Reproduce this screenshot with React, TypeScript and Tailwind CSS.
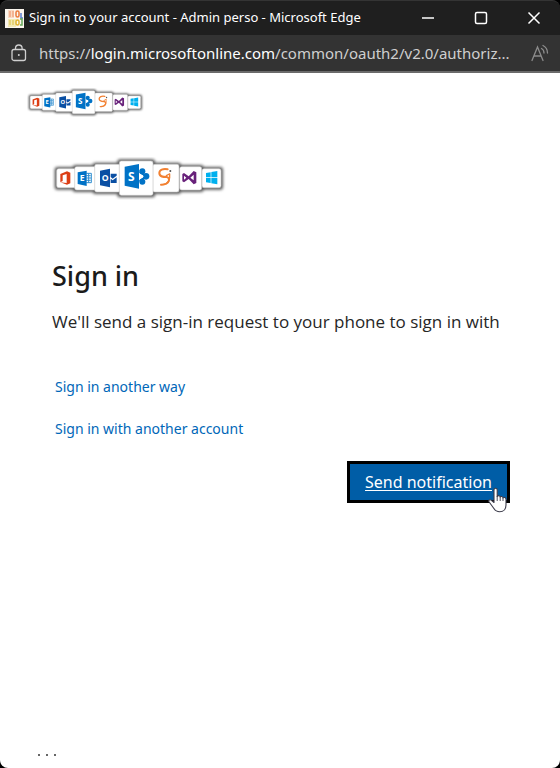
import React from "react";

type LogoProps = {
  className: string;
};

type TileProps = {
  x: number;
  y: number;
  width: number;
  height: number;
};

const tiles: TileProps[] = [
  { x: 35, y: 56, width: 57, height: 57 },
  { x: 471, y: 56, width: 57, height: 57 },
  { x: 89, y: 50, width: 64, height: 70 },
  { x: 404, y: 50, width: 66, height: 70 },
  { x: 149, y: 43, width: 77, height: 83 },
  { x: 323, y: 43, width: 79, height: 83 },
  { x: 223, y: 33, width: 101, height: 103 },
];

const BrandLogo: React.FC<LogoProps> = ({ className }) => {
  return (
    <svg
      viewBox="21 21 522 129"
      className={className}
      role="img"
      aria-label="Organization logo"
    >
      <g className="blur-xs">
        {tiles.map((tile) => (
          <rect
            key={tile.x}
            x={tile.x - 6}
            y={tile.y - 5}
            width={tile.width + 12}
            height={tile.height + 11}
            rx="8"
            fill="#5a5a5a"
          />
        ))}
      </g>
      {tiles.map((tile) => (
        <rect
          key={tile.x}
          {...tile}
          rx="6"
          fill="#fff"
          stroke="#c8c8c8"
          strokeWidth="2"
        />
      ))}

      {/* Office */}
      <path
        fill="#dc3e15"
        fillRule="evenodd"
        d="M46 72 66 64l10 4v32l-10 4-20-7 19 2V72l-12 4v17l-7 4z"
      />

      {/* Exchange */}
      <path
        fill="none"
        stroke="#2f8ed0"
        strokeWidth="3"
        d="M124 70h15v28h-15M124 77h13M124 84h14M124 91h13M131 70v28"
      />
      <path fill="#0072c6" d="m98 67 27-5v46l-27-6z" />
      <text
        x="104"
        y="94"
        fill="#fff"
        fontSize="26"
        fontWeight="700"
        fontFamily="Open Sans, sans-serif"
      >
        E
      </text>

      {/* Outlook */}
      <path fill="#0a4fa3" d="m165 62 30-6v56l-30-6z" />
      <path fill="#0a4fa3" d="M197 71h18v6l-12 9-6-5zM197 86l6 5 12-9v17h-18z" />
      <text
        x="170"
        y="93"
        fill="#fff"
        fontSize="26"
        fontWeight="700"
        fontFamily="Open Sans, sans-serif"
      >
        O
      </text>

      {/* SharePoint */}
      <path
        fill="none"
        stroke="#0072c6"
        strokeWidth="6"
        d="m284 64 12-5 M284 66l18 13M284 93l18-13M284 93h12"
      />
      <circle cx="292" cy="64" r="9" fill="#0072c6" />
      <circle cx="303" cy="79" r="10" fill="#0072c6" />
      <circle cx="292" cy="95" r="9" fill="#0072c6" />
      <circle cx="290" cy="79" r="5" fill="#fff" />
      <path fill="#0072c6" d="m239 50 43-8v74l-43-9z" />
      <text
        x="249"
        y="92"
        fill="#fff"
        fontSize="36"
        fontWeight="700"
        fontFamily="Open Sans, sans-serif"
      >
        S
      </text>

      {/* Swoosh */}
      <path
        fill="none"
        stroke="#f28132"
        strokeWidth="6"
        strokeLinecap="round"
        d="M368 58c-14-3-25 2-25 11 0 12 12 12 22 12 12 2 10 24-17 23"
      />
      <path
        fill="none"
        stroke="#f28132"
        strokeWidth="4"
        strokeLinecap="round"
        d="M374 72c2 18-3 29-20 32M364 77l9-5"
      />
      <circle cx="376" cy="63" r="3" fill="#555" />

      {/* Visual Studio */}
      <path
        fill="#68217a"
        fillRule="evenodd"
        d="m412 72 5-3 14 10 15-16 8 4v32l-8 4-15-16-14 10-5-3zm5 5v12l7-6zm19 6 10 8V74z"
      />

      {/* Windows */}
      <path
        fill="#00b0ee"
        d="m483 69 14-2v15h-14zM499 66l18-3v19h-18zM483 84h14v15l-14-2zM499 84h18v19l-18-3z"
      />
    </svg>
  );
};

const Favicon: React.FC = () => {
  return (
    <svg viewBox="0 0 19 19" className="size-[19px] shrink-0" aria-hidden="true">
      <path fill="#fbf6ee" d="M0 0h19v19H0z" />
      <path fill="#fad9c2" d="M3 1h6v8H3z" />
      <path fill="#f3e9b4" d="M3 10h8v8H3z" />
      <path
        fill="none"
        stroke="#f2a683"
        strokeWidth="1.5"
        d="M5 2v6M8 2v6"
      />
      <path
        fill="none"
        stroke="#e3cb66"
        strokeWidth="1.5"
        d="M5 11v5M8 11v5"
      />
      <rect
        x="11"
        y="2"
        width="3"
        height="6"
        rx="1.5"
        fill="none"
        stroke="#ec7a3c"
        strokeWidth="1.5"
      />
      <rect
        x="11"
        y="11"
        width="3"
        height="5"
        rx="1.5"
        fill="none"
        stroke="#e0b32c"
        strokeWidth="1.5"
      />
      <path fill="none" stroke="#5b7fd0" strokeWidth="1.5" d="M16 4v5h2" />
      <path fill="none" stroke="#64a75a" strokeWidth="1.5" d="M15 10h2v6h-2" />
    </svg>
  );
};

const TitleBar: React.FC = () => {
  return (
    <header className="flex h-[35px] items-center rounded-t-lg border-t border-[#343434] bg-[#1f1f1f] pl-[5px] text-white">
      <Favicon />
      <h1 className="ml-[5px] flex-1 truncate text-[13px]">
        Sign in to your account - Admin perso - Microsoft Edge
      </h1>
      <button
        type="button"
        aria-label="Minimize"
        className="flex h-full w-[53px] items-center justify-center"
      >
        <svg viewBox="0 0 14 14" className="size-[14px]">
          <path stroke="#fff" strokeWidth="1.5" d="M1 7h12" />
        </svg>
      </button>
      <button
        type="button"
        aria-label="Maximize"
        className="flex h-full w-[53px] items-center justify-center"
      >
        <svg viewBox="0 0 14 14" className="size-[14px]" fill="none">
          <rect
            x="1.5"
            y="1.5"
            width="11"
            height="11"
            rx="1.5"
            stroke="#fff"
            strokeWidth="1.5"
          />
        </svg>
      </button>
      <button
        type="button"
        aria-label="Close"
        className="flex h-full w-[53px] items-center justify-center"
      >
        <svg viewBox="0 0 14 14" className="size-[14px]">
          <path
            stroke="#fff"
            strokeWidth="1.5"
            d="m1.500 1.500 11 11M12.500 1.500l-11 11"
          />
        </svg>
      </button>
    </header>
  );
};

const AddressBar: React.FC = () => {
  return (
    <div className="flex h-[38px] items-center border-b-2 border-[#6b6b6b] bg-[#333333] pr-2.5 pl-[11px]">
      <svg
        viewBox="0 0 16 18"
        className="h-[18px] w-4 shrink-0"
        fill="none"
        stroke="#d0d0d0"
        strokeWidth="1.3"
      >
        <rect x="1" y="5.500" width="13.500" height="11" rx="2" />
        <path d="M4.500 5.500V4.300a3.300 3.300 0 0 1 6.600 0v1.200" />
        <circle cx="7.800" cy="11" r="1" fill="#d0d0d0" stroke="none" />
      </svg>
      <p className="ml-3 flex-1 truncate text-[15px] text-[#cfcfcf]">
        https://<span className="text-white">login.microsoftonline.com</span>
        /common/oauth2/v2.0/authoriz...
      </p>
      <button type="button" aria-label="Read aloud" className="shrink-0">
        <svg
          viewBox="0 0 20 18"
          className="h-[18px] w-5"
          fill="none"
          stroke="#8c8c8c"
          strokeWidth="1.3"
          strokeLinecap="round"
        >
          <path d="M2 16.500 7.500 3 13 16.500M4 12h7" />
          <path d="M11.500 4.500c1.500.8 2.500 2.500 2.500 4.500M13 1.500c2.500 1.200 4.500 4 4.500 7.500" />
        </svg>
      </button>
    </div>
  );
};

const HandCursor: React.FC = () => {
  return (
    <svg
      viewBox="0 0 20 26"
      className="pointer-events-none absolute right-0.5 -bottom-2.5 h-[26px] w-5"
      aria-hidden="true"
    >
      <path
        fill="#fff"
        stroke="#3b3b4a"
        strokeWidth="1.1"
        strokeLinejoin="round"
        d="M6 15.500V3c0-2.400 3.200-2.400 3.200 0v6.500c.6-1.300 2.900-1 3 .5.7-1 2.700-.6 2.800.9.900-.9 3-.4 3 1.400V18c0 4-2.500 6.800-6.300 6.800-3 0-4.600-1.300-6-3.500L1 14.800c-.8-1.500 1-2.700 2.400-1.500z"
      />
      <path
        stroke="#3b3b4a"
        strokeWidth="0.9"
        d="M9.200 9v5M12.200 10v4M15 11v3"
      />
    </svg>
  );
};

const App: React.FC = () => {
  return (
    <div className="min-h-screen bg-black font-['Noto_Sans',sans-serif]">
      <div className="flex min-h-screen flex-col">
        <TitleBar />
        <AddressBar />
        <main className="flex flex-1 flex-col rounded-b-lg bg-white">
          <BrandLogo className="mt-[15px] ml-[27px] h-[29px] w-[117px]" />
          <section className="mr-[50px] ml-[52px] flex flex-col items-start pt-10">
            <BrandLogo className="h-[43px] w-[174px]" />
            <h2 className="mt-14 text-[27px] leading-10 font-medium text-[#1b1b1b]">
              Sign in
            </h2>
            <p className="mt-3.5 font-['Open_Sans',sans-serif] text-[17px] leading-6 text-[#262626]">
              We'll send a sign-in request to your phone to sign in with
            </p>
            <div className="mt-[41px] ml-[3px] flex flex-col gap-[18px] text-sm leading-6 text-[#0067b8]">
              <a href="#another-way">Sign in another way</a>
              <a href="#another-account">Sign in with another account</a>
            </div>
            <div className="relative mt-5 self-end">
              <button
                type="button"
                className="block h-[42px] w-[163px] border-[3px] border-black bg-[#005da6] text-base text-white underline underline-offset-2"
              >
                Send notification
              </button>
              <HandCursor />
            </div>
          </section>
          <footer className="mt-auto pb-2 pl-9">
            <button
              type="button"
              aria-label="More options"
              className="flex h-[11px] w-[22px] items-center justify-between px-0.5"
            >
              <span className="size-0.5 bg-[#666666]" />
              <span className="size-0.5 bg-[#666666]" />
              <span className="size-0.5 bg-[#666666]" />
            </button>
          </footer>
        </main>
      </div>
    </div>
  );
};

export default App;
